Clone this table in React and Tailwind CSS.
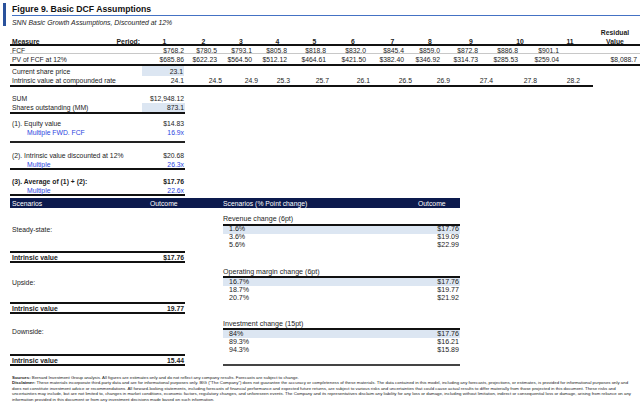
import React from 'react';

const FONT = { fontFamily: '"Liberation Sans", Arial, sans-serif' };

const headerCols = "grid grid-cols-[135px_39px_39px_36px_37px_37px_40px_39px_36px_46px_52px_48px_42px_4px]";
const valueCols = "grid grid-cols-[135px_39px_33px_35px_35px_39px_40px_38px_36px_38px_40px_41px_81px]";
const rateCols = "grid grid-cols-[135px_39px_38px_36px_32px_39px_41px_42px_38px_43px_44px_43px_13px]";

const periods = ["1", "2", "3", "4", "5", "6", "7", "8", "9", "10", "11"];
const fcf = ["$768.2", "$780.5", "$793.1", "$805.8", "$818.8", "$832.0", "$845.4", "$859.0", "$872.8", "$886.8", "$901.1", ""];
const pv = ["$685.86", "$622.23", "$564.50", "$512.12", "$464.61", "$421.50", "$382.40", "$346.92", "$314.73", "$285.53", "$259.04", "$8,088.7"];
const rates = ["24.1", "24.5", "24.9", "25.3", "25.7", "26.1", "26.5", "26.9", "27.4", "27.8", "28.2"];

const scenarios = [
    { label: "Revenue change (6pt)", rows: [["1.6%", "$17.76"], ["3.6%", "$19.09"], ["5.6%", "$22.99"]], rowH: "h-[8px]", mt: "mt-[7.5px]" },
    { label: "Operating margin change (6pt)", rows: [["16.7%", "$17.76"], ["18.7%", "$19.77"], ["20.7%", "$21.92"]], rowH: "h-[8px]", mt: "mt-[18.5px]" },
    { label: "Investment change (15pt)", rows: [["84%", "$17.76"], ["89.3%", "$16.21"], ["94.3%", "$15.89"]], rowH: "h-[8.3px]", mt: "mt-[18px]" },
];

const IntrinsicRow = ({ value }) => (
    <div className="flex h-[12px] items-center justify-between border-y-2 border-[#111] pl-[2px] pr-[1px] font-bold">
        <span>Intrinsic value</span>
        <span>{value}</span>
    </div>
);

const ScenarioGroup = ({ group }) => (
    <div className={group.mt}>
        <div className="flex h-[10px] items-center border-b-2 border-[#111] pb-[1px] leading-[8px]">{group.label}</div>
        {group.rows.map(([pct, val], i) => (
            <div
                key={pct}
                className={`${group.rowH} flex items-center justify-between pl-[6px] pr-[1px] ${i === 0 ? 'bg-[#dce6f2]' : ''}`}
            >
                <span>{pct}</span>
                <span>{val}</span>
            </div>
        ))}
    </div>
);

const App = () => {
    return (
        <div className="w-[640px] h-[404px] overflow-hidden bg-white text-[#1c1c1c]" style={FONT}>
            {/* Header */}
            <div className="flex h-[28px] pt-[3px]">
                <div className="ml-[3px] h-[23px] w-[3px] bg-[#2a529c]" />
                <div className="ml-[6px] flex-1">
                    <div className="h-[13px] border-b-[1.5px] border-[#4472c4] pt-[2px] text-[8.7px] font-bold leading-[9px] text-[#111]">
                        Figure 9. Basic DCF Assumptions
                    </div>
                    <div className="mt-[3px] text-[6.9px] italic leading-[8px]">
                        SNN Basic Growth Assumptions, Discounted at 12%
                    </div>
                </div>
            </div>

            <div className="pl-[10px] text-[6.8px] leading-[9px]">
                {/* Projection table */}
                <div className={`${headerCols} h-[18px] border-b-2 border-[#111] pb-[1px] font-bold items-end`}>
                    <div className="flex justify-between pl-[2px] pr-[5px]">
                        <span>Measure</span>
                        <span>Period:</span>
                    </div>
                    {periods.map((p) => (
                        <div key={p} className="text-center">{p}</div>
                    ))}
                    <div className="text-center">Residual<br />Value</div>
                    <div />
                </div>
                <div className={`${valueCols} h-[8px] items-center border-b border-[#c8c8c8]`}>
                    <div className="pl-[2px]">FCF</div>
                    {fcf.map((v, i) => (
                        <div key={i} className="text-right">{v}</div>
                    ))}
                </div>
                <div className={`${valueCols} h-[12px] items-center border-b-2 border-[#111]`}>
                    <div className="pl-[2px]">PV of FCF at 12%</div>
                    {pv.map((v, i) => (
                        <div key={i} className={`text-right ${i === 11 ? 'pr-[3px]' : ''}`}>{v}</div>
                    ))}
                </div>
                <div className={`${valueCols} h-[10px] items-stretch`}>
                    <div className="flex items-center pl-[2px]">Current share price</div>
                    <div className="-ml-[3px] flex items-center justify-end bg-[#dce6f2] pr-[1px]">23.1</div>
                </div>
                <div className={`${rateCols} w-[583px] h-[11px] items-center border-b-2 border-[#111]`}>
                    <div className="pl-[2px]">Intrinsic value at compounded rate</div>
                    {rates.map((v, i) => (
                        <div key={i} className="text-right">{v}</div>
                    ))}
                    <div />
                </div>

                {/* Valuation summary */}
                <div className="mt-[7px] w-[175px]">
                    <div className="flex h-[9px] items-center justify-between pl-[2px] pr-[1px]">
                        <span>SUM</span>
                        <span>$12,948.12</span>
                    </div>
                    <div className="flex h-[11px] items-stretch border-b-2 border-[#111]">
                        <div className="flex flex-1 items-center pl-[2px]">Shares outstanding (MM)</div>
                        <div className="flex w-[43px] items-center justify-end bg-[#dce6f2] pr-[1px]">873.1</div>
                    </div>

                    <div className="border-b-2 border-[#222] pb-[4px] pt-[5px]">
                        <div className="flex h-[9px] items-center justify-between pl-[2px] pr-[1px]">
                            <span>(1). Equity value</span>
                            <span>$14.83</span>
                        </div>
                        <div className="flex h-[9px] items-center justify-between pl-[17px] pr-[1px] text-[#2b45e0]">
                            <span>Multiple FWD. FCF</span>
                            <span>16.9x</span>
                        </div>
                    </div>

                    <div className="border-b-2 border-[#111] pt-[8px]">
                        <div className="flex h-[9px] items-center justify-between pl-[2px] pr-[1px]">
                            <span>(2). Intrinsic value discounted at 12%</span>
                            <span>$20.68</span>
                        </div>
                        <div className="flex h-[8px] items-center justify-between pl-[17px] pr-[1px] text-[#2b45e0]">
                            <span>Multiple</span>
                            <span>26.3x</span>
                        </div>
                    </div>

                    <div className="border-b-2 border-[#111] pt-[7px]">
                        <div className="flex h-[9px] items-center justify-between pl-[2px] pr-[1px] font-bold">
                            <span>(3). Average of (1) + (2):</span>
                            <span>$17.76</span>
                        </div>
                        <div className="flex h-[8px] items-center justify-between pl-[17px] pr-[1px] text-[#2b45e0]">
                            <span>Multiple</span>
                            <span>22.6x</span>
                        </div>
                    </div>
                </div>

                {/* Scenarios */}
                <div className="mt-[2px] flex h-[10px] w-[450px] items-center bg-[#0c1a4d] text-white">
                    <span className="w-[140px] pl-[2px]">Scenarios</span>
                    <span className="w-[73px]">Outcome</span>
                    <span className="w-[195px]">Scenarios (% Point change)</span>
                    <span>Outcome</span>
                </div>

                <div className="flex w-[450px] gap-[38px]">
                    <div className="w-[175px]">
                        <div className="flex h-[43px] items-center pl-[2px]">Steady-state:</div>
                        <IntrinsicRow value="$17.76" />
                        <div className="flex h-[39px] items-center pl-[2px]">Upside:</div>
                        <IntrinsicRow value="19.77" />
                        <div className="h-[40px] pl-[2px] pt-[13px]">Downside:</div>
                        <IntrinsicRow value="15.44" />
                    </div>
                    <div className="flex-1 border-b-2 border-[#444] pb-[9px] text-[7.1px]">
                        {scenarios.map((g) => (
                            <ScenarioGroup key={g.label} group={g} />
                        ))}
                    </div>
                </div>
            </div>

            {/* Footer */}
            <div className="mt-[9px] pl-[12px] text-[4.35px] leading-[5.4px] whitespace-nowrap text-[#222]">
                <div>
                    <b>Sources:</b> Bernard Investment Group analysis. All figures are estimates only and do not reflect any company results. Forecasts are subject to change.
                </div>
                <div>
                    <b>Disclaimer:</b> These materials incorporate third-party data and are for informational purposes only. BIG ("The Company") does not guarantee the accuracy or completeness of these materials. The data contained in this model, including any forecasts, projections, or estimates, is provided for informational purposes only and
                </div>
                <div>
                    does not constitute investment advice or recommendations. All forward-looking statements, including forecasts of financial performance and expected future returns, are subject to various risks and uncertainties that could cause actual results to differ materially from those projected in this document. These risks and
                </div>
                <div>
                    uncertainties may include, but are not limited to, changes in market conditions, economic factors, regulatory changes, and unforeseen events. The Company and its representatives disclaim any liability for any loss or damage, including without limitation, indirect or consequential loss or damage, arising from reliance on any
                </div>
                <div>
                    information provided in this document or from any investment decisions made based on such information.
                </div>
            </div>
        </div>
    );
};

export default App;
